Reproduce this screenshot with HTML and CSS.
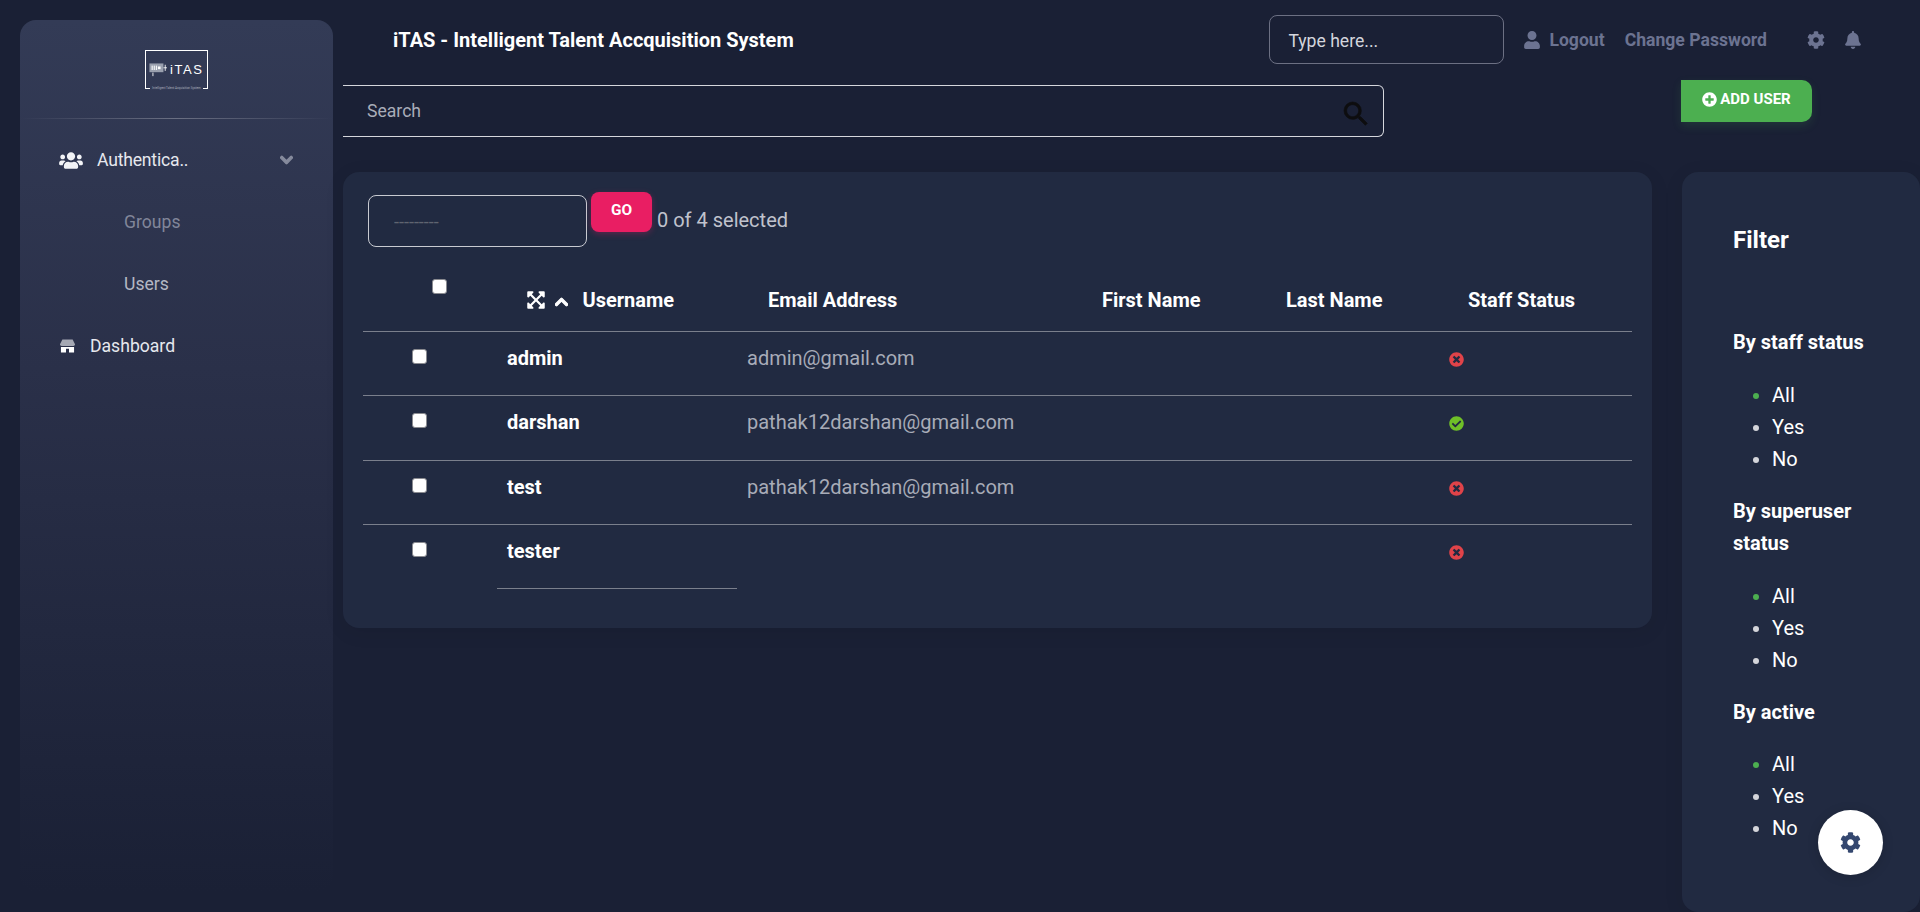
FILE: index.html
```html
<!DOCTYPE html>
<html lang="en">
<head>
<meta charset="utf-8">
<title>iTAS - Users</title>
<link rel="stylesheet" href="styles.css">
</head>
<body>
<svg class="defs" aria-hidden="true">
  <symbol id="i-users" viewBox="0 0 640 512"><path d="M96 224c35.3 0 64-28.7 64-64s-28.7-64-64-64-64 28.7-64 64 28.7 64 64 64zm448 0c35.3 0 64-28.7 64-64s-28.7-64-64-64-64 28.7-64 64 28.7 64 64 64zm32 32h-64c-17.6 0-33.5 7.1-45.1 18.6 40.3 22.1 68.9 62 75.1 109.4h66c17.7 0 32-14.3 32-32v-32c0-35.3-28.7-64-64-64zm-256 0c61.9 0 112-50.1 112-112S381.9 32 320 32 208 82.1 208 144s50.1 112 112 112zm76.8 32h-8.3c-20.8 10-43.9 16-68.5 16s-47.6-6-68.5-16h-8.3C179.6 288 128 339.6 128 403.2V432c0 26.5 21.5 48 48 48h288c26.5 0 48-21.5 48-48v-28.8c0-63.6-51.6-115.2-115.2-115.2zm-223.7-13.4C161.5 263.1 145.6 256 128 256H64c-35.3 0-64 28.7-64 64v32c0 17.7 14.3 32 32 32h65.9c6.3-47.4 34.9-87.3 75.2-109.4z"/></symbol>
  <symbol id="i-user" viewBox="0 0 448 512"><path d="M224 256c70.7 0 128-57.3 128-128S294.7 0 224 0 96 57.3 96 128s57.3 128 128 128zm89.6 32h-16.7c-22.2 10.2-46.9 16-72.9 16s-50.6-5.8-72.9-16h-16.7C60.2 288 0 348.2 0 422.4V464c0 26.5 21.5 48 48 48h352c26.5 0 48-21.5 48-48v-41.6c0-74.2-60.2-134.4-134.4-134.4z"/></symbol>
  <symbol id="i-bell" viewBox="0 0 448 512"><path d="M224 512c35.32 0 63.97-28.65 63.97-64H160.03c0 35.35 28.65 64 63.97 64zm215.39-149.71c-19.32-20.76-55.47-51.99-55.47-154.29 0-77.7-54.48-139.9-127.94-155.16V32c0-17.67-14.32-32-31.98-32s-31.98 14.33-31.98 32v20.84C118.56 68.1 64.08 130.3 64.08 208c0 102.3-36.15 133.53-55.47 154.29-6 6.45-8.66 14.16-8.61 21.71.11 16.4 12.98 32 32.1 32h383.8c19.12 0 32-15.6 32.1-32 .05-7.55-2.61-15.27-8.61-21.71z"/></symbol>
  <symbol id="i-cog" viewBox="0 0 512 512"><path d="M487.4 315.7l-42.6-24.6c4.3-23.2 4.3-47 0-70.2l42.6-24.6c4.9-2.8 7.1-8.6 5.5-14-11.1-35.6-30-67.8-54.7-94.6-3.8-4.1-10-5.1-14.8-2.3L380.8 110c-17.9-15.4-38.5-27.3-60.8-35.1V25.8c0-5.6-3.9-10.5-9.4-11.7-36.7-8.2-74.3-7.8-109.2 0-5.5 1.2-9.4 6.1-9.4 11.7V75c-22.2 7.9-42.8 19.8-60.8 35.1L88.7 85.5c-4.9-2.8-11-1.9-14.8 2.3-24.7 26.7-43.6 58.9-54.7 94.6-1.7 5.4.6 11.2 5.5 14L67.3 221c-4.3 23.2-4.3 47 0 70.2l-42.6 24.6c-4.9 2.8-7.1 8.6-5.5 14 11.1 35.6 30 67.8 54.7 94.6 3.8 4.1 10 5.1 14.8 2.3l42.6-24.6c17.9 15.4 38.5 27.3 60.8 35.1v49.2c0 5.6 3.9 10.5 9.4 11.7 36.7 8.2 74.3 7.8 109.2 0 5.5-1.2 9.4-6.1 9.4-11.7v-49.2c22.2-7.9 42.8-19.8 60.8-35.1l42.6 24.6c4.9 2.8 11 1.9 14.8-2.3 24.7-26.7 43.6-58.9 54.7-94.6 1.5-5.5-.7-11.3-5.6-14.1zM256 336c-44.1 0-80-35.9-80-80s35.9-80 80-80 80 35.9 80 80-35.9 80-80 80z"/></symbol>
  <symbol id="i-down" viewBox="0 0 448 512"><path d="M207.029 381.476L12.686 187.132c-9.373-9.373-9.373-24.569 0-33.941l22.667-22.667c9.357-9.357 24.522-9.375 33.901-.04L224 284.505l154.745-154.021c9.379-9.335 24.544-9.317 33.901.04l22.667 22.667c9.373 9.373 9.373 24.569 0 33.941L240.971 381.476c-9.373 9.372-24.569 9.372-33.942 0z"/></symbol>
  <symbol id="i-up" viewBox="0 0 448 512"><path d="M240.971 130.524l194.343 194.343c9.373 9.373 9.373 24.569 0 33.941l-22.667 22.667c-9.357 9.357-24.522 9.375-33.901.04L224 227.495 69.255 381.516c-9.379 9.335-24.544 9.317-33.901-.04l-22.667-22.667c-9.373-9.373-9.373-24.569 0-33.941L207.03 130.525c9.372-9.373 24.568-9.373 33.941-.001z"/></symbol>
  <symbol id="i-plus" viewBox="0 0 512 512"><path d="M256 8C119 8 8 119 8 256s111 248 248 248 248-111 248-248S393 8 256 8zm144 276c0 6.6-5.4 12-12 12h-92v92c0 6.6-5.4 12-12 12h-56c-6.6 0-12-5.4-12-12v-92h-92c-6.6 0-12-5.4-12-12v-56c0-6.6 5.4-12 12-12h92v-92c0-6.6 5.4-12 12-12h56c6.6 0 12 5.4 12 12v92h92c6.6 0 12 5.4 12 12v56z"/></symbol>
  <symbol id="i-yes" viewBox="0 0 512 512"><path d="M504 256c0 136.967-111.033 248-248 248S8 392.967 8 256 119.033 8 256 8s248 111.033 248 248zM227.314 387.314l184-184c6.248-6.248 6.248-16.379 0-22.627l-22.627-22.627c-6.248-6.249-16.379-6.249-22.628 0L216 308.118l-70.059-70.059c-6.248-6.248-16.379-6.248-22.628 0l-22.627 22.627c-6.248 6.248-6.248 16.379 0 22.627l104 104c6.249 6.249 16.379 6.249 22.628.001z"/></symbol>
  <symbol id="i-no" viewBox="0 0 512 512"><path d="M256 8C119 8 8 119 8 256s111 248 248 248 248-111 248-248S393 8 256 8zm121.6 313.1c4.7 4.7 4.7 12.3 0 17L338 377.6c-4.7 4.7-12.3 4.7-17 0L256 312l-65.1 65.6c-4.7 4.7-12.3 4.7-17 0L134.4 338c-4.7-4.7-4.7-12.3 0-17l65.6-65-65.6-65.1c-4.7-4.7-4.7-12.3 0-17l39.6-39.6c4.7-4.7 12.3-4.7 17 0l65 65.7 65.1-65.6c4.7-4.7 12.3-4.7 17 0l39.6 39.6c4.7 4.7 4.7 12.3 0 17L312 256l65.6 65.1z"/></symbol>
  <symbol id="i-expand" viewBox="0 0 448 512"><path d="M448 344v112a23.94 23.94 0 0 1-24 24H312c-21.39 0-32.09-25.9-17-41l36.2-36.2L224 295.6 116.77 402.9 153 439c15.09 15.1 4.39 41-17 41H24a23.94 23.94 0 0 1-24-24V344c0-21.4 25.89-32.1 41-17l36.19 36.2L184.46 256 77.18 148.7 41 185c-15.1 15.1-41 4.4-41-17V56a23.94 23.94 0 0 1 24-24h112c21.39 0 32.09 25.9 17 41l-36.2 36.2L224 216.4l107.23-107.3L295 73c-15.09-15.1-4.39-41 17-41h112a23.94 23.94 0 0 1 24 24v112c0 21.4-25.89 32.1-41 17l-36.19-36.2L263.54 256l107.28 107.3L407 327.1c15.1-15.2 41-4.5 41 16.9z"/></symbol>
  <symbol id="i-search" viewBox="0 0 24 24"><path d="M15.5 14h-.79l-.28-.27A6.471 6.471 0 0 0 16 9.5 6.5 6.5 0 1 0 9.5 16c1.61 0 3.09-.59 4.23-1.57l.27.28v.79l5 4.99L20.49 19l-4.99-5zm-6 0C7.01 14 5 11.99 5 9.5S7.01 5 9.5 5 14 7.01 14 9.5 11.99 14 9.5 14z"/></symbol>
</svg>

<aside class="sidebar">
  <div class="logo-wrap">
    <div class="logo">
      <svg class="logo-mark" viewBox="0 0 24 16">
        <rect x="0.5" y="0.5" width="16" height="10" fill="#9aa0ae"/>
        <rect x="3" y="3" width="1.2" height="5" fill="#fff"/>
        <rect x="5.4" y="3" width="1.2" height="5" fill="#fff"/>
        <rect x="7.8" y="3" width="1.2" height="5" fill="#fff"/>
        <rect x="10.2" y="4" width="3" height="3" fill="#fff"/>
        <rect x="4" y="11" width="1" height="4" fill="#fff"/>
        <rect x="18" y="2" width="1" height="7" fill="#fff"/>
        <rect x="16.5" y="5" width="4" height="1" fill="#fff"/>
      </svg>
      <span class="logo-name">iTAS</span>
      <span class="logo-tag">Intelligent Talent Acquisition System</span>
    </div>
  </div>
  <div class="sb-divider"></div>
  <nav class="nav">
    <a class="nav-item nav-parent">
      <svg class="ic ic-users"><use href="#i-users"/></svg>
      <span class="nav-label">Authentica..</span>
      <svg class="ic ic-caret"><use href="#i-down"/></svg>
    </a>
    <a class="nav-item nav-sub nav-sub-dim">Groups</a>
    <a class="nav-item nav-sub">Users</a>
    <a class="nav-item nav-dash">
      <svg class="ic-store" viewBox="0 0 16 14">
        <path class="awning" d="M2.5 0h11L16 5.2c0 1-.8 1.8-1.8 1.8H1.8C.8 7 0 6.2 0 5.2z"/>
        <path class="base" d="M1 8h14v6H9.6v-4H6.4v4H1z"/>
      </svg>
      <span>Dashboard</span>
    </a>
  </nav>
</aside>

<div class="main">
  <header class="topbar">
    <h1 class="title">iTAS - Intelligent Talent Accquisition System</h1>
    <input class="type-here" type="text" placeholder="Type here...">
    <a class="top-link"><svg class="ic ic-user"><use href="#i-user"/></svg>Logout</a>
    <a class="top-link top-link-pw">Change Password</a>
    <svg class="ic ic-top ic-top-cog"><use href="#i-cog"/></svg>
    <svg class="ic ic-top ic-top-bell"><use href="#i-bell"/></svg>
  </header>

  <div class="toolbar">
    <div class="search">
      <input class="search-input" type="text" placeholder="Search">
      <svg class="ic ic-search"><use href="#i-search"/></svg>
    </div>
    <button class="add-user"><svg class="ic ic-plus"><use href="#i-plus"/></svg>ADD USER</button>
  </div>

  <div class="content">
    <section class="card">
      <div class="actions">
        <select class="action-select"><option>---------</option></select>
        <button class="go">GO</button>
        <span class="counter">0 of 4 selected</span>
      </div>
      <table class="users">
        <colgroup>
          <col class="c1"><col class="c2"><col class="c3"><col class="c4"><col class="c5"><col class="c6">
        </colgroup>
        <thead>
          <tr>
            <th class="th-check"><input type="checkbox" class="check"></th>
            <th class="th-user"><svg class="ic ic-expand"><use href="#i-expand"/></svg><svg class="ic ic-sort"><use href="#i-up"/></svg>Username</th>
            <th>Email Address</th>
            <th>First Name</th>
            <th class="th-last">Last Name</th>
            <th class="th-staff">Staff Status</th>
          </tr>
        </thead>
        <tbody>
          <tr>
            <td class="td-check"><input type="checkbox" class="check"></td>
            <th scope="row" class="row-name">admin</th>
            <td>admin@gmail.com</td><td></td><td></td>
            <td><svg class="ic status status-no"><use href="#i-no"/></svg></td>
          </tr>
          <tr>
            <td class="td-check"><input type="checkbox" class="check"></td>
            <th scope="row" class="row-name">darshan</th>
            <td>pathak12darshan@gmail.com</td><td></td><td></td>
            <td><svg class="ic status status-yes"><use href="#i-yes"/></svg></td>
          </tr>
          <tr>
            <td class="td-check"><input type="checkbox" class="check"></td>
            <th scope="row" class="row-name">test</th>
            <td>pathak12darshan@gmail.com</td><td></td><td></td>
            <td><svg class="ic status status-no"><use href="#i-no"/></svg></td>
          </tr>
          <tr>
            <td class="td-check"><input type="checkbox" class="check"></td>
            <th scope="row" class="row-name">tester</th>
            <td></td><td></td><td></td>
            <td><svg class="ic status status-no"><use href="#i-no"/></svg></td>
          </tr>
        </tbody>
      </table>
    </section>

    <aside class="filter">
      <h3>Filter</h3>
      <h4 class="first">By staff status</h4>
      <ul><li class="on">All</li><li>Yes</li><li>No</li></ul>
      <h4>By superuser status</h4>
      <ul><li class="on">All</li><li>Yes</li><li>No</li></ul>
      <h4>By active</h4>
      <ul class="last"><li class="on">All</li><li>Yes</li><li>No</li></ul>
    </aside>
  </div>
</div>

<button class="fab" aria-label="Settings"><svg class="ic ic-fab"><use href="#i-cog"/></svg></button>
</body>
</html>
```

FILE: styles.css
```css
* { box-sizing: border-box; }
html, body { height: 100%; margin: 0; }
body {
  display: flex;
  height: 912px;
  overflow: hidden;
  background: #1a2035;
  color: #fff;
  font-family: Roboto, "Liberation Sans", sans-serif;
  font-size: 18px;
}
.defs { display: none; }
.ic { display: block; fill: currentColor; flex: none; }

/* sidebar */
.sidebar {
  flex: none;
  width: 313px;
  margin: 20px 10px 20px 20px;
  border-radius: 16px;
  background: linear-gradient(180deg, #333b56 0%, #2a3049 40%, #1a2035 100%);
}
.logo-wrap { display: flex; justify-content: center; padding: 30px 0 29px 0; }
.logo {
  position: relative;
  display: flex;
  align-items: center;
  width: 63px;
  height: 39px;
  padding: 0 0 0 3px;
  border: 1px solid #fff;
}
.logo-mark { width: 21px; height: 14px; flex: none; }
.logo-name { font-family: "Liberation Sans", sans-serif; font-size: 13px; line-height: 14px; letter-spacing: 1.6px; color: #fff; }
.logo-tag {
  position: absolute;
  left: 4px;
  right: 4px;
  bottom: -2px;
  background: #333b56;
  color: #a9adba;
  font-size: 3px;
  line-height: 4px;
  text-align: center;
  white-space: nowrap;
}
.sb-divider {
  height: 1px;
  background: linear-gradient(90deg, rgba(255,255,255,0) 0%, rgba(255,255,255,.28) 50%, rgba(255,255,255,0) 100%);
}
.nav { display: flex; flex-direction: column; padding-top: 10px; }
.nav-item {
  display: flex;
  align-items: center;
  height: 62px;
  font-size: 17.6px;
  color: #e6e8ee;
}
.nav-label { letter-spacing: -.2px; }
.nav-parent { padding: 0 40px 0 39px; }
.ic-users { width: 24px; height: 19px; margin-right: 14px; color: #f2f3f6; }
.ic-caret { width: 13px; height: 14px; margin-left: auto; color: #868b9d; stroke: #868b9d; stroke-width: 50px; }
.nav-sub { padding-left: 104px; color: #b5b8c4; }
.nav-sub-dim { color: #81869a; }
.nav-dash { padding-left: 40px; }
.ic-store { width: 15px; height: 14px; margin-right: 15px; flex: none; }
.awning { fill: #a5a8b3; }
.base { fill: #fff; }

/* main */
.main { flex: 1; min-width: 0; display: flex; flex-direction: column; }
.topbar { display: flex; align-items: center; height: 49px; margin-top: 15px; }
.title { margin: 0 0 0 50px; font-size: 20px; line-height: 26px; font-weight: 700; color: #fff; white-space: nowrap; }
.type-here {
  width: 235px;
  height: 49px;
  margin-left: auto;
  margin-right: 20px;
  padding: 2px 18px 0;
  border: 1px solid #6c7083;
  border-radius: 8px;
  background: transparent;
  color: #fff;
  font: 17.6px Roboto, sans-serif;
}
.type-here::placeholder { color: #d4d6dd; opacity: 1; }
.top-link {
  display: flex;
  align-items: center;
  font-size: 17.6px;
  font-weight: 700;
  color: #6c7391;
}
.ic-user { width: 16px; height: 18px; margin-right: 9px; }
.top-link-pw { margin-left: 20px; }
.ic-top { color: #6c7391; }
.ic-top-cog { width: 18px; height: 18px; margin-left: 40px; }
.ic-top-bell { width: 18px; height: 18px; margin-left: 19px; margin-right: 58px; }

.toolbar { display: flex; align-items: flex-start; height: 57px; margin-top: 16px; }
.search { position: relative; width: 1041px; height: 52px; margin-top: 5px; }
.search-input {
  width: 100%;
  height: 100%;
  padding: 0 60px 0 24px;
  border: 1px solid #d5d6dc;
  border-left: 0;
  border-radius: 0 6px 6px 0;
  background: transparent;
  color: #fff;
  font: 17.6px Roboto, sans-serif;
}
.search-input::placeholder { color: #a9adb9; opacity: 1; }
.ic-search { position: absolute; right: 12px; top: 13px; width: 32px; height: 32px; color: #0d0d0f; stroke: #0d0d0f; stroke-width: .5px; }
.add-user {
  display: flex;
  align-items: center;
  justify-content: center;
  width: 131px;
  height: 42px;
  margin-left: 297px;
  padding: 0 0 4px;
  border: 0;
  border-radius: 0 10px 10px 0;
  background: #4caf50;
  color: #fff;
  font: 700 15px Roboto, sans-serif;
  box-shadow: 0 4px 10px rgba(76,175,80,.15);
}
.ic-plus { width: 15px; height: 15px; margin-right: 3px; }

.content { flex: 1; min-height: 0; display: flex; align-items: flex-start; margin-top: 35px; }
.card {
  width: 1309px;
  padding: 20px 20px 39px;
  border-radius: 16px;
  background: #212a41;
  box-shadow: 0 4px 20px rgba(0,0,0,.08);
}
.actions { display: flex; align-items: flex-start; height: 55px; }
.action-select {
  appearance: none;
  -webkit-appearance: none;
  width: 219px;
  height: 52px;
  margin: 3px 0 0 5px;
  padding: 0 0 0 25px;
  border: 1px solid #c8cad1;
  border-radius: 8px;
  background: transparent;
  color: #5f6470;
  font: 18px Roboto, sans-serif;
}
.go {
  width: 61px;
  height: 40px;
  margin-left: 4px;
  padding: 0 0 5px;
  border: 0;
  border-radius: 8px;
  background: #e91e63;
  color: #fff;
  font: 700 15.4px Roboto, sans-serif;
  box-shadow: 0 2px 6px rgba(233,30,99,.3);
}
.counter { margin: 15px 0 0 5px; line-height: 26px; font-size: 20px; color: #c0c3cd; }

.users { width: 1269px; table-layout: fixed; border-collapse: separate; border-spacing: 0; }
.c1 { width: 134px; } .c2 { width: 240px; } .c3 { width: 334px; }
.c4 { width: 185px; } .c5 { width: 183px; } .c6 { width: 193px; }
.users thead th {
  height: 85px;
  padding: 0 0 18px 31px;
  vertical-align: bottom;
  text-align: left;
  font-size: 20px;
  line-height: 26px;
  font-weight: 700;
  color: #fff;
  border-bottom: 1px solid #7a7f8c;
  white-space: nowrap;
}
.users thead .th-check { padding: 0 0 37px 69px; }
.users thead .th-user { padding-left: 30px; }
.users thead .th-last { padding-left: 30px; }
.users thead .th-staff { padding-left: 29px; }
.th-user .ic { display: inline-block; vertical-align: -3px; }
.ic-expand { width: 18px; height: 20px; margin-right: 10px; }
.ic-sort { width: 13px; height: 16px; margin-right: 14.5px; stroke: #fff; stroke-width: 40px; }
.users tbody td, .users tbody th {
  height: 64.25px;
  padding: 13px 10px 0;
  vertical-align: top;
  text-align: left;
  font-size: 20px;
  line-height: 26px;
  font-weight: 400;
  color: #a8acb8;
  border-bottom: 1px solid #7a7f8c;
}
.users tbody .row-name { font-weight: 700; color: #fff; }
.users tbody tr:last-child td { border-bottom: 0; }
.users tbody .td-check { padding-left: 49px; }
.check {
  appearance: none;
  -webkit-appearance: none;
  display: block;
  width: 15px;
  height: 15px;
  margin: 4px 0 0;
  border: 1px solid #8a8b90;
  border-radius: 3px;
  background: #fff;
}
.th-check .check { margin: 0; }
.status { width: 15px; height: 15px; margin-top: 7px; }
.status-no { color: #e04349; }
.status-yes { color: #6fbf28; }

.filter {
  align-self: stretch;
  width: 238px;
  margin-left: 30px;
  padding: 53px 51px 0;
  border-radius: 16px;
  background: #212a41;
  box-shadow: 0 4px 20px rgba(0,0,0,.08);
}
.filter h3 { margin: 0; font-size: 24px; line-height: 30px; font-weight: 700; }
.filter h4 { margin: 0; font-size: 20px; line-height: 32px; font-weight: 700; }
.filter h4.first { margin-top: 71px; }
.filter ul { margin: 21px 0 20px; padding: 0 0 0 39px; }
.filter ul.last { margin-top: 20px; }
.filter li { font-size: 20px; line-height: 32px; color: #fff; }
.filter li::marker { color: #d4d5da; }
.filter li.on::marker { color: #4caf50; }

.fab {
  position: fixed;
  right: 37px;
  bottom: 37px;
  display: flex;
  align-items: center;
  justify-content: center;
  width: 65px;
  height: 65px;
  padding: 0;
  border: 0;
  border-radius: 50%;
  background: #fff;
  box-shadow: 0 2px 12px rgba(0,0,0,.15);
}
.ic-fab { width: 21px; height: 21px; color: #34476f; }
```
